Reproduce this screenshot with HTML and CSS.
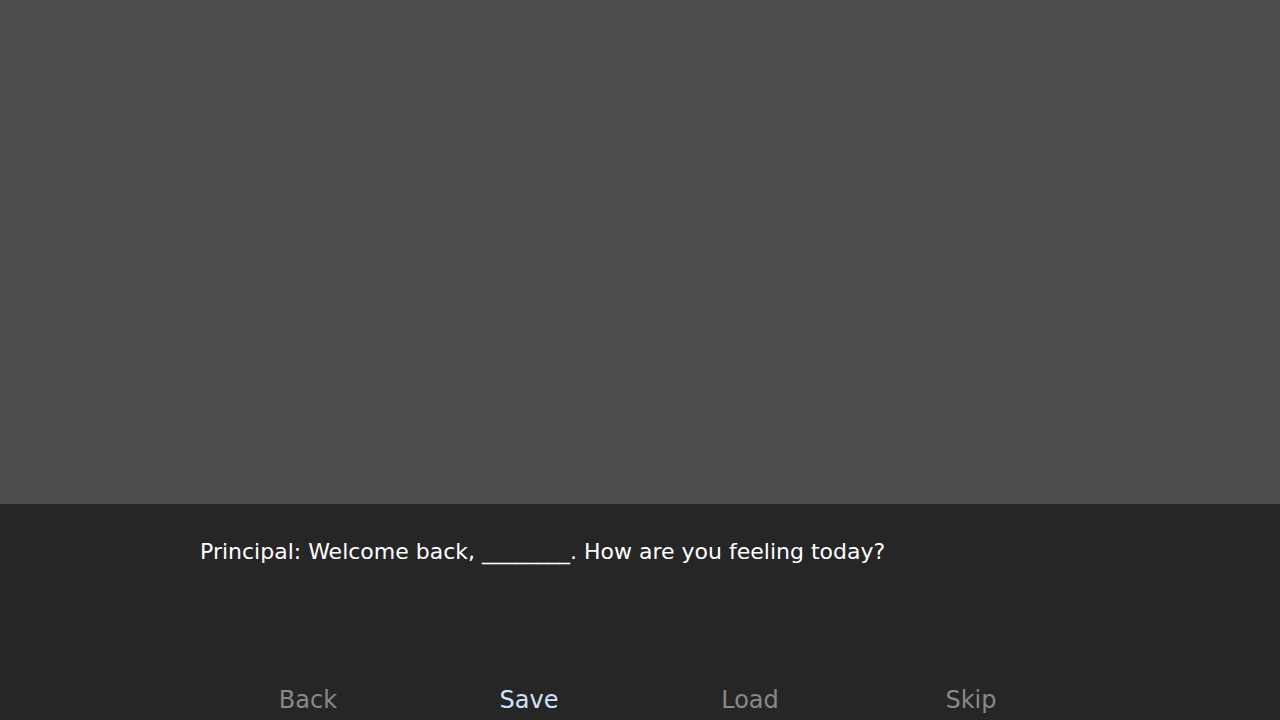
FILE: index.html
```html
<!DOCTYPE html>
<html>
<head>
<meta charset="utf-8">
<link rel="stylesheet" href="styles.css">
</head>
<body>
<div class="screen">
  <div class="scene"></div>
  <div class="dialogue">
    <p class="say">Principal: Welcome back, ________. How are you feeling today?</p>
    <nav class="menu">
      <span class="btn">Back</span>
      <span class="btn active">Save</span>
      <span class="btn">Load</span>
      <span class="btn">Skip</span>
    </nav>
  </div>
</div>
</body>
</html>
```
FILE: styles.css
```css
html, body {
  margin: 0;
  padding: 0;
  background: #262626;
}
.screen {
  width: 1280px;
  height: 720px;
  overflow: hidden;
  display: flex;
  flex-direction: column;
  font-family: "DejaVu Sans", sans-serif;
}
.scene {
  height: 504px;
  background: #4c4c4c;
  flex: none;
}
.dialogue {
  flex: 1;
  background: #262626;
  display: flex;
  flex-direction: column;
}
.say {
  margin: 0;
  padding: 35px 0 0 200px;
  color: #ffffff;
  font-size: 22px;
  line-height: 25.6px;
  height: 182px;
  box-sizing: border-box;
  flex: none;
}
.menu {
  display: grid;
  grid-template-columns: repeat(4, 221px);
  padding-left: 197.5px;
  font-size: 24px;
  line-height: 28px;
}
.btn {
  text-align: center;
  color: #888888;
}
.btn.active {
  color: #cfe3fb;
}
```
